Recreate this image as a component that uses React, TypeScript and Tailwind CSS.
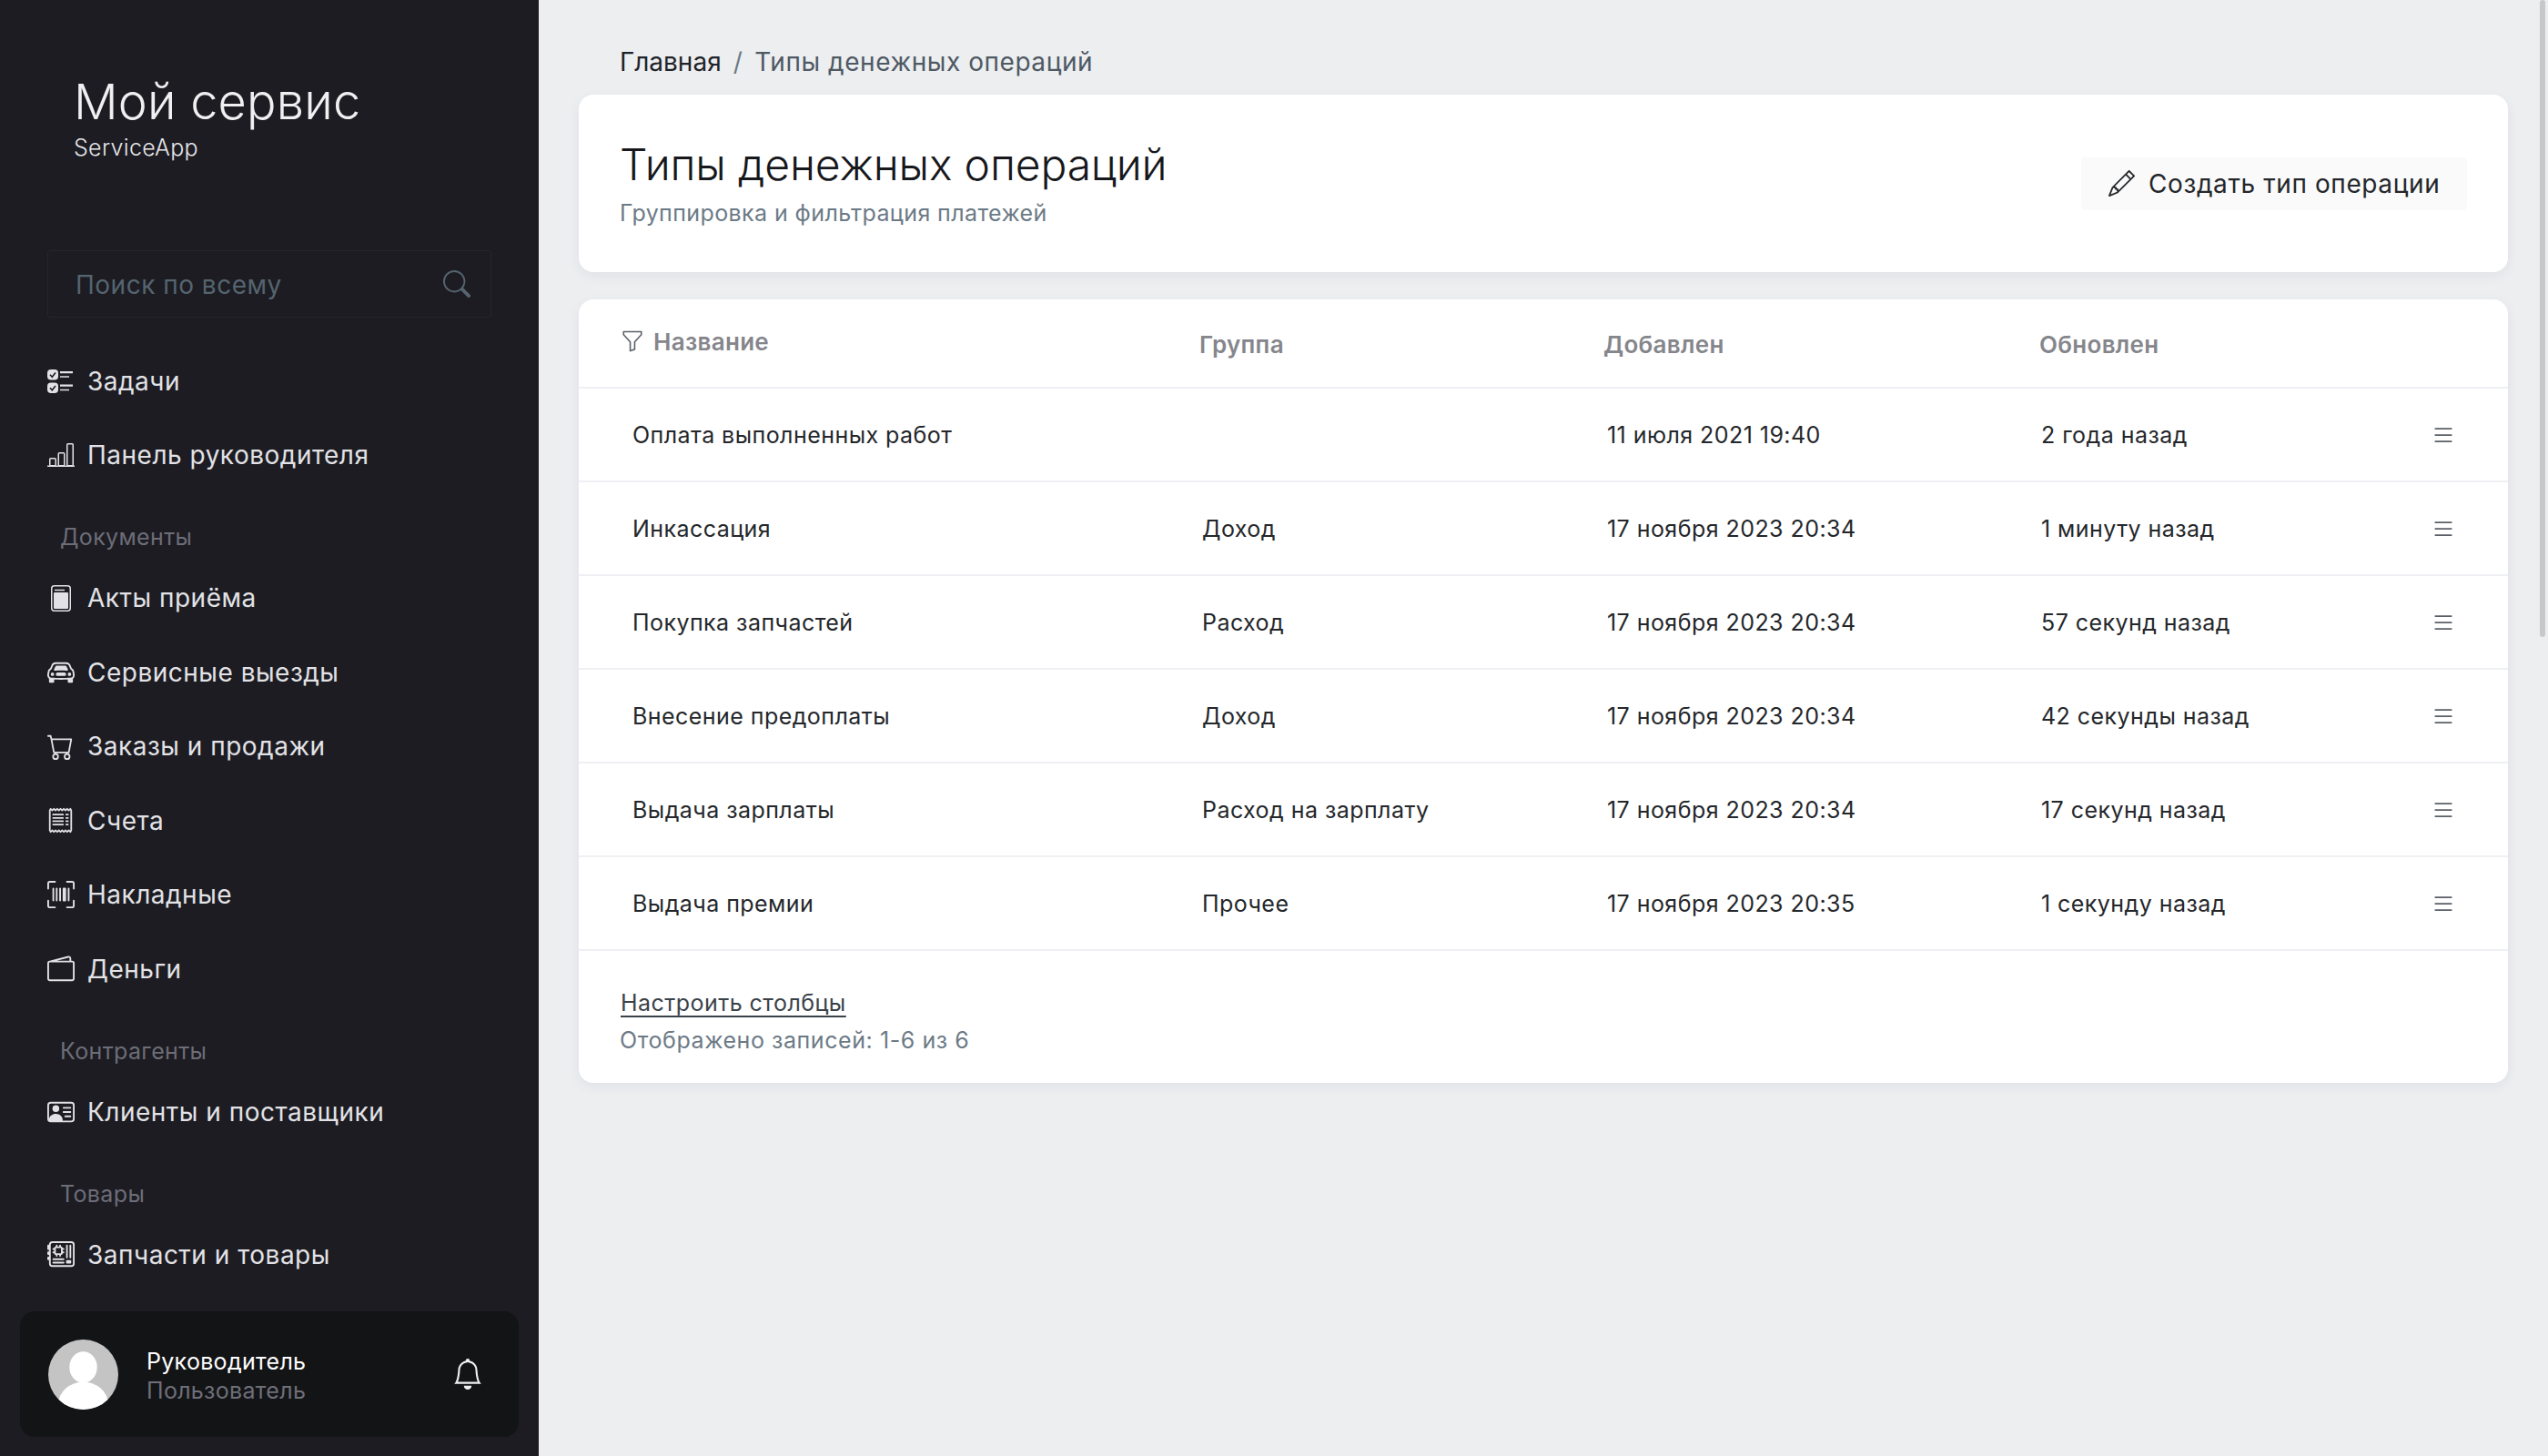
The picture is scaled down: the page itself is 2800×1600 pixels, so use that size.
import {
  BsBell,
  BsCarFront,
  BsCart,
  BsFunnel,
  BsList,
  BsMotherboard,
  BsPencil,
  BsPersonVcard,
  BsReceipt,
  BsSearch,
  BsUpcScan,
  BsWallet2,
} from 'react-icons/bs';
import type { ReactNode } from 'react';

function ActsIcon() {
  return (
    <svg viewBox="0 0 22 29" className="ml-[4px] h-[29px] w-[22px]" fill="none">
      <rect x="0.75" y="0.75" width="20.5" height="27.5" rx="3" stroke="currentColor" strokeWidth="1.5" />
      <path d="M4 5.5h11" stroke="currentColor" strokeWidth="1.5" />
      <rect x="3" y="8" width="16" height="18" rx="1" fill="currentColor" />
    </svg>
  );
}

function TasksIcon() {
  return (
    <svg viewBox="0 0 29 26" className="h-[26px] w-[29px]" fill="none">
      <rect x="0" y="0" width="12" height="11.5" rx="4" fill="currentColor" />
      <rect x="0" y="14.5" width="12" height="11.5" rx="4" fill="currentColor" />
      <path d="M3 5.8l2.3 2.4L9 3.6M3 20.3l2.3 2.4L9 18.1" stroke="#1c1c22" strokeWidth="1.6" />
      <path d="M14 3.2h14M14 17.7h14" stroke="currentColor" strokeWidth="2.2" />
      <path d="M14 8h10M14 22.5h10" stroke="currentColor" strokeWidth="1.4" />
    </svg>
  );
}

function ChartIcon() {
  return (
    <svg viewBox="0 0 30 26" className="h-[26px] w-[30px]" fill="none" stroke="currentColor" strokeWidth="1.5">
      <rect x="2.75" y="16.75" width="6.5" height="8" rx="1" />
      <rect x="12.25" y="10.75" width="6.5" height="14" rx="1" />
      <rect x="21.75" y="0.75" width="6.5" height="24" rx="1" />
      <path d="M0 25.25h30" />
    </svg>
  );
}

function NavItem({ icon, label }: { icon: ReactNode; label: string }) {
  return (
    <div className="flex h-[81.5px] items-center text-[#e2e2e6]">
      <div className="flex w-[44px] shrink-0 items-center">{icon}</div>
      <span className="text-[28px] leading-[40px] tracking-[0.5px]">{label}</span>
    </div>
  );
}

function NavLabel({ children }: { children: string }) {
  return (
    <div className="h-[75.5px] pl-[14px] pt-[32px] text-[25px] leading-[34px] tracking-[0.35px] text-[#6d6d78]">
      {children}
    </div>
  );
}

function Avatar() {
  return (
    <svg viewBox="0 0 76 76" className="h-[77px] w-[77px] shrink-0">
      <clipPath id="avatar-clip">
        <circle cx="38" cy="38" r="38" />
      </clipPath>
      <g clipPath="url(#avatar-clip)">
        <rect width="76" height="76" fill="#c4c4c4" />
        <ellipse cx="38" cy="30" rx="15" ry="17" fill="#ffffff" />
        <ellipse cx="38" cy="70" rx="27" ry="24" fill="#ffffff" />
      </g>
    </svg>
  );
}

function Sidebar() {
  return (
    <aside className="flex h-[1600px] w-[592px] shrink-0 flex-col bg-[#1c1c22]">
      <div className="pl-[81px] pt-[78px]">
        <div className="text-[54px] font-light leading-[68px] tracking-[0.2px] text-[#f0f0f2]">Мой сервис</div>
        <div className="mt-[1px] text-[25px] font-light leading-[30px] tracking-[0.3px] text-[#e6e6ea]">ServiceApp</div>
      </div>

      <div className="mx-[52px] mt-[98px] flex h-[74px] items-center justify-between rounded-[3px] border border-[#26272d] pl-[30px] pr-[22px]">
        <span className="translate-y-[1px] text-[28px] tracking-[0.5px] text-[#55646f]">Поиск по всему</span>
        <BsSearch className="h-[30px] w-[30px] text-[#55646f]" />
      </div>

      <nav className="mt-[29px] pl-[52px]">
        <NavItem icon={<TasksIcon />} label="Задачи" />
        <NavItem icon={<ChartIcon />} label="Панель руководителя" />
        <NavLabel>Документы</NavLabel>
        <NavItem icon={<ActsIcon />} label="Акты приёма" />
        <NavItem icon={<BsCarFront className="h-[30px] w-[30px]" />} label="Сервисные выезды" />
        <NavItem icon={<BsCart className="h-[29px] w-[29px]" />} label="Заказы и продажи" />
        <NavItem icon={<BsReceipt className="h-[29px] w-[29px]" />} label="Счета" />
        <NavItem icon={<BsUpcScan className="h-[30px] w-[30px]" />} label="Накладные" />
        <NavItem icon={<BsWallet2 className="h-[30px] w-[30px]" />} label="Деньги" />
        <NavLabel>Контрагенты</NavLabel>
        <NavItem icon={<BsPersonVcard className="h-[30px] w-[30px]" />} label="Клиенты и поставщики" />
        <NavLabel>Товары</NavLabel>
        <NavItem icon={<BsMotherboard className="h-[30px] w-[30px]" />} label="Запчасти и товары" />
      </nav>

      <div className="mx-[22px] mt-auto mb-[21px] flex h-[138px] items-center rounded-[16px] bg-[#131416] pl-[31px] pr-[39px]">
        <Avatar />
        <div className="ml-[31px] flex-1 translate-y-[2px]">
          <div className="text-[25px] leading-[32px] tracking-[0.3px] text-white">Руководитель</div>
          <div className="text-[25px] leading-[32px] tracking-[0.3px] text-[#6f6f7a]">Пользователь</div>
        </div>
        <BsBell className="h-[34px] w-[34px] text-[#f0f0f0]" />
      </div>
    </aside>
  );
}

const rows = [
  { name: 'Оплата выполненных работ', group: '', added: '11 июля 2021 19:40', updated: '2 года назад' },
  { name: 'Инкассация', group: 'Доход', added: '17 ноября 2023 20:34', updated: '1 минуту назад' },
  { name: 'Покупка запчастей', group: 'Расход', added: '17 ноября 2023 20:34', updated: '57 секунд назад' },
  { name: 'Внесение предоплаты', group: 'Доход', added: '17 ноября 2023 20:34', updated: '42 секунды назад' },
  { name: 'Выдача зарплаты', group: 'Расход на зарплату', added: '17 ноября 2023 20:34', updated: '17 секунд назад' },
  { name: 'Выдача премии', group: 'Прочее', added: '17 ноября 2023 20:35', updated: '1 секунду назад' },
];

function TypesTable() {
  return (
    <section className="mt-[30px] rounded-[16px] bg-white shadow-[0_4px_14px_rgba(30,40,60,0.06)]">
      {/* Header */}
      <div className="grid h-[98px] grid-cols-[623px_444px_479px_1fr] items-center border-b-[2px] border-[#eff0f4] pl-[59px] pr-[61px] pt-[4px] text-[26px] font-semibold leading-[34px] tracking-[0.3px] text-[#85868c]">
        <div className="-ml-[13px] -mt-[7px] flex items-center gap-[10px]">
          <BsFunnel className="h-[26px] w-[26px] -translate-y-[1px] text-[#5d6268]" />
          <span>Название</span>
        </div>
        <div>Группа</div>
        <div>Добавлен</div>
        <div>Обновлен</div>
      </div>

      {rows.map((row) => (
        <div
          key={row.name}
          className="grid h-[103px] grid-cols-[626px_445px_477px_1fr_24px] items-center border-b-[2px] border-[#eff0f4] pl-[59px] pr-[61px] text-[25px] leading-[36px] tracking-[0.45px] text-[#24272b]"
        >
          <div>{row.name}</div>
          <div>{row.group}</div>
          <div>{row.added}</div>
          <div>{row.updated}</div>
          <BsList className="h-[28px] w-[28px] text-[#5a6068]" />
        </div>
      ))}

      {/* Footer */}
      <div className="h-[145px] pl-[45px] pt-[39px]">
        <a className="ml-[1px] block text-[25px] leading-[36px] tracking-[0.45px] text-[#3a4249] underline underline-offset-[5px]">
          Настроить столбцы
        </a>
        <div className="mt-[5px] text-[25px] leading-[36px] tracking-[0.57px] text-[#6c7a86]">Отображено записей: 1-6 из 6</div>
      </div>
    </section>
  );
}

export default function App() {
  return (
    <div className="relative flex h-[1600px] overflow-hidden bg-[#eceef0] font-['Inter',sans-serif]">
      <Sidebar />
      <main className="flex-1 pl-[44px] pr-[44px]">
        {/* Breadcrumb */}
        <div className="flex h-[104px] items-center pl-[45px] pt-[32px] text-[28px] leading-[40px] tracking-[0.55px]">
          <span className="tracking-normal text-[#1f2328]">Главная</span>
          <span className="mx-[13px] text-[#6c7a86]">/</span>
          <span className="text-[#4f5964]">Типы денежных операций</span>
        </div>

        {/* Title card */}
        <section className="flex h-[195px] items-center justify-between rounded-[16px] bg-white pl-[45px] pr-[45px] shadow-[0_4px_14px_rgba(30,40,60,0.06)]">
          <div>
            <h1 className="-mt-[3px] text-[48px] font-light leading-[62px] tracking-[-0.15px] text-[#17181c]">Типы денежных операций</h1>
            <p className="mt-[5px] text-[25px] leading-[34px] tracking-[0.4px] text-[#6c7a86]">Группировка и фильтрация платежей</p>
          </div>
          <button className="flex h-[58px] w-[424px] items-center rounded-[4px] bg-[#fafafa] pl-[30px] text-[28px] tracking-[0.6px] text-[#24272b]">
            <BsPencil className="mr-[15px] h-[29px] w-[29px]" />
            Создать тип операции
          </button>
        </section>

        <TypesTable />
      </main>

      {/* Scrollbar thumb */}
      <div className="absolute right-[3px] top-[0px] h-[700px] w-[6px] rounded-full bg-[#c8c8c8]" />
    </div>
  );
}
